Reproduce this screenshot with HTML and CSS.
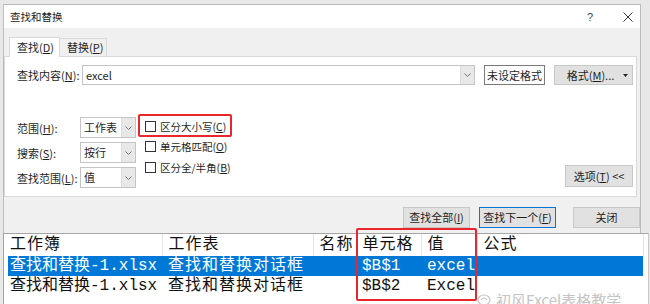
FILE: index.html
```html
<!DOCTYPE html>
<html lang="zh-CN">
<head>
    <meta charset="UTF-8">
    <meta name="viewport" content="width=device-width, initial-scale=1.0">
    <title>查找和替换</title>
    <link rel="stylesheet" href="styles.css">
</head>
<body>
    <div class="dialog">
        <div class="titlebar">
            <span class="title">查找和替换</span>
            <span class="help">?</span>
            <svg class="close" width="10" height="10" viewBox="0 0 10 10">
                <path d="M0.5 0.5 L9.5 9.5 M9.5 0.5 L0.5 9.5" stroke="#333" stroke-width="1" fill="none"/>
            </svg>
        </div>
        <div class="main">
            <div class="tabs">
                <div class="tab active">查找(<u>D</u>)</div>
                <div class="tab">替换(<u>P</u>)</div>
            </div>
            <div class="panel">
                <div class="find-row">
                    <label class="find-label">查找内容(<u>N</u>):</label>
                    <div class="combo combo-wide">
                        <span class="combo-text">excel</span>
                        <span class="combo-arrow"><svg width="7" height="4" viewBox="0 0 7 4"><polyline points="0.5,0.5 3.5,3.5 6.5,0.5" fill="none" stroke="#777"/></svg></span>
                    </div>
                    <div class="format-preview">未设定格式</div>
                    <div class="btn btn-format">格式(<u>M</u>)...<svg class="caret" width="5" height="3" viewBox="0 0 5 3"><polygon points="0,0 5,0 2.5,3" fill="#222"/></svg></div>
                </div>
                <div class="options">
                    <div class="selects">
                        <div class="opt-row">
                            <label class="opt-label">范围(<u>H</u>):</label>
                            <div class="combo combo-small">
                                <span class="combo-text">工作表</span>
                                <span class="combo-arrow"><svg width="7" height="4" viewBox="0 0 7 4"><polyline points="0.5,0.5 3.5,3.5 6.5,0.5" fill="none" stroke="#777"/></svg></span>
                            </div>
                        </div>
                        <div class="opt-row">
                            <label class="opt-label">搜索(<u>S</u>):</label>
                            <div class="combo combo-small">
                                <span class="combo-text">按行</span>
                                <span class="combo-arrow"><svg width="7" height="4" viewBox="0 0 7 4"><polyline points="0.5,0.5 3.5,3.5 6.5,0.5" fill="none" stroke="#777"/></svg></span>
                            </div>
                        </div>
                        <div class="opt-row">
                            <label class="opt-label">查找范围(<u>L</u>):</label>
                            <div class="combo combo-small">
                                <span class="combo-text">值</span>
                                <span class="combo-arrow"><svg width="7" height="4" viewBox="0 0 7 4"><polyline points="0.5,0.5 3.5,3.5 6.5,0.5" fill="none" stroke="#777"/></svg></span>
                            </div>
                        </div>
                    </div>
                    <div class="checks">
                        <label class="check"><span class="box"></span>区分大小写(<u>C</u>)</label>
                        <label class="check"><span class="box"></span>单元格匹配(<u>O</u>)</label>
                        <label class="check"><span class="box"></span>区分全/半角(<u>B</u>)</label>
                    </div>
                    <div class="btn btn-options">选项(<u>T</u>) &lt;&lt;</div>
                </div>
            </div>
            <div class="actions">
                <div class="btn btn-action btn-all">查找全部(<u>I</u>)</div>
                <div class="btn btn-action btn-next">查找下一个(<u>F</u>)</div>
                <div class="btn btn-action btn-closebtn">关闭</div>
            </div>
        </div>
    </div>

    <div class="results">
        <table class="result-table">
            <colgroup>
                <col style="width:154px">
                <col style="width:151px">
                <col style="width:43px">
                <col style="width:65px">
                <col style="width:56px">
                <col style="width:166px">
            </colgroup>
            <thead>
                <tr>
                    <th class="first">工作簿</th>
                    <th>工作表</th>
                    <th class="name">名称</th>
                    <th>单元格</th>
                    <th>值</th>
                    <th>公式</th>
                </tr>
            </thead>
            <tbody>
                <tr class="selected">
                    <td class="first">查找和替换-1.xlsx</td>
                    <td class="sheet">查找和替换对话框</td>
                    <td></td>
                    <td>$B$1</td>
                    <td>excel</td>
                    <td></td>
                </tr>
                <tr>
                    <td class="first">查找和替换-1.xlsx</td>
                    <td class="sheet">查找和替换对话框</td>
                    <td></td>
                    <td>$B$2</td>
                    <td>Excel</td>
                    <td></td>
                </tr>
            </tbody>
        </table>
    </div>

    <div class="mark mark-case"></div>
    <div class="mark mark-cells"></div>

    <div class="watermark">
        <svg width="16" height="14" viewBox="0 0 16 14">
            <ellipse cx="7" cy="6" rx="6" ry="5" fill="none" stroke="#c4c4c4" stroke-width="1.2"/>
            <path d="M4 6 Q7 2 10 6" fill="none" stroke="#c4c4c4" stroke-width="1.2"/>
        </svg>
        <span>初风Excel表格教学</span>
    </div>
</body>
</html>
```

FILE: styles.css
```css
* {
    box-sizing: border-box;
}
body {
    margin: 0;
    padding: 4px 0 0 3px;
    width: 650px;
    height: 304px;
    overflow: hidden;
    position: relative;
    background-color: #e8e8e8;
    font-family: "Noto Sans CJK SC", "Noto Sans", sans-serif;
    font-size: 11px;
    color: #1e1e1e;
}
u {
    text-decoration-thickness: 1px;
    text-underline-offset: 1px;
}

/* dialog frame */
.dialog {
    width: 638px;
    border: 1px solid #bcbcbc;
    border-bottom: none;
    background-color: #f0f0f0;
}
.titlebar {
    height: 23px;
    background-color: #fff;
    display: flex;
    align-items: center;
    padding-left: 6px;
}
.title {
    font-size: 10.5px;
    color: #222;
}
.help {
    margin-left: auto;
    font-family: "Liberation Sans", sans-serif;
    font-size: 11px;
    color: #444;
}
.close {
    margin: 0 7px 0 30px;
}
.main {
    padding-top: 9px;
}

/* tabs */
.tabs {
    display: flex;
    height: 19px;
    padding-left: 5px;
}
.tab {
    height: 18px;
    margin-top: 1px;
    width: 47px;
    padding-left: 7px;
    line-height: 17px;
    border-top: 1px solid #d9d9d9;
    border-right: 1px solid #d9d9d9;
    background-color: #f0f0f0;
}
.tab.active {
    position: relative;
    z-index: 1;
    height: 20px;
    margin-top: 0;
    width: 51px;
    padding-left: 7px;
    line-height: 19px;
    border-left: 1px solid #d9d9d9;
    background-color: #fff;
}

/* panel */
.panel {
    height: 141px;
    margin-right: 3px;
    border: 1px solid #d9d9d9;
    background-color: #fff;
    padding: 8px 3px 0 12px;
}
.find-row {
    display: flex;
    align-items: center;
    height: 20px;
}
.find-label {
    width: 65px;
}
.combo {
    display: flex;
    height: 100%;
    border: 1px solid #c4c4c4;
    background-color: #fff;
}
.combo-text {
    flex: 1;
    padding-left: 3px;
    line-height: 18px;
    white-space: nowrap;
}
.combo-arrow {
    width: 14px;
    display: flex;
    align-items: center;
    justify-content: center;
    border-left: 1px solid #dcdcdc;
    background-color: #e8e8e8;
}
.combo-wide {
    width: 393px;
}
.format-preview {
    width: 61px;
    height: 20px;
    margin-left: 9px;
    border: 1px solid #7a7a7a;
    text-align: center;
    line-height: 18px;
}
.btn {
    background-color: #e1e1e1;
    border: 1px solid #c8c8c8;
    text-align: center;
}
.btn-format {
    width: 79px;
    height: 20px;
    margin-left: 9px;
    line-height: 18px;
    position: relative;
    padding-right: 6px;
}
.caret {
    position: absolute;
    right: 4px;
    top: 8px;
}

/* option area */
.options {
    display: flex;
    margin-top: 32px;
    height: 71px;
}
.selects {
    display: flex;
    flex-direction: column;
    gap: 4px;
}
.opt-row {
    display: flex;
    align-items: center;
    height: 21px;
}
.opt-label {
    width: 63px;
}
.combo-small {
    width: 56px;
}
.checks {
    margin-left: 9px;
    margin-top: -1px;
    display: flex;
    flex-direction: column;
}
.check {
    display: flex;
    align-items: center;
    height: 20.5px;
    font-size: 10.5px;
}
.box {
    width: 11px;
    height: 11px;
    border: 1px solid #333;
    margin-right: 4px;
    background-color: #fff;
}
.btn-options {
    margin-left: auto;
    align-self: flex-end;
    margin-bottom: 1px;
    width: 68px;
    height: 22px;
    line-height: 20px;
}

/* bottom buttons */
.actions {
    display: flex;
    justify-content: flex-end;
    height: 36px;
    padding-top: 10px;
}
.btn-action {
    height: 21px;
    line-height: 19px;
}
.btn-all {
    width: 67px;
}
.btn-next {
    width: 77px;
    margin-left: 9px;
    border-color: #0078d7;
}
.btn-closebtn {
    width: 67px;
    margin-left: 17px;
}

/* result list */
.results {
    width: 646px;
    height: 71px;
    border-top: 1px solid #a5a5a5;
    border-left: 1px solid #a5a5a5;
    border-right: 1px solid #c8c8c8;
    background-color: #fff;
    padding-left: 4px;
}
.result-table {
    width: 635px;
    border-collapse: collapse;
    table-layout: fixed;
    font-family: "Liberation Mono", "Noto Sans CJK SC", monospace;
    font-size: 16px;
    color: #111;
}
.result-table th,
.result-table td {
    padding: 0 0 0 6px;
    white-space: nowrap;
    overflow: hidden;
    text-align: left;
    font-weight: normal;
}
.result-table th {
    height: 22px;
    line-height: 22px;
    letter-spacing: 1px;
    border-right: 1px solid #e5e5e5;
}
.result-table td {
    height: 20px;
    line-height: 20px;
}
.result-table .first {
    padding-left: 2px;
}
.result-table th.name {
    text-align: right;
    padding-right: 2px;
}
.result-table td.sheet {
    letter-spacing: 1px;
}
.result-table tr.selected td {
    background-color: #0078d7;
    color: #fff;
}

/* highlight marks drawn over the screenshot */
.mark {
    position: absolute;
    border: 2px solid #e8262b;
    border-radius: 2px;
}
.mark-case {
    left: 138px;
    top: 114px;
    width: 94px;
    height: 23px;
}
.mark-cells {
    left: 356px;
    top: 228px;
    width: 121px;
    height: 73px;
}

.watermark {
    position: absolute;
    left: 477px;
    top: 291px;
    display: flex;
    align-items: flex-start;
    gap: 3px;
    color: #c4c4c4;
    font-size: 15px;
    line-height: 18px;
}
.watermark svg {
    margin-top: 3px;
}
```
